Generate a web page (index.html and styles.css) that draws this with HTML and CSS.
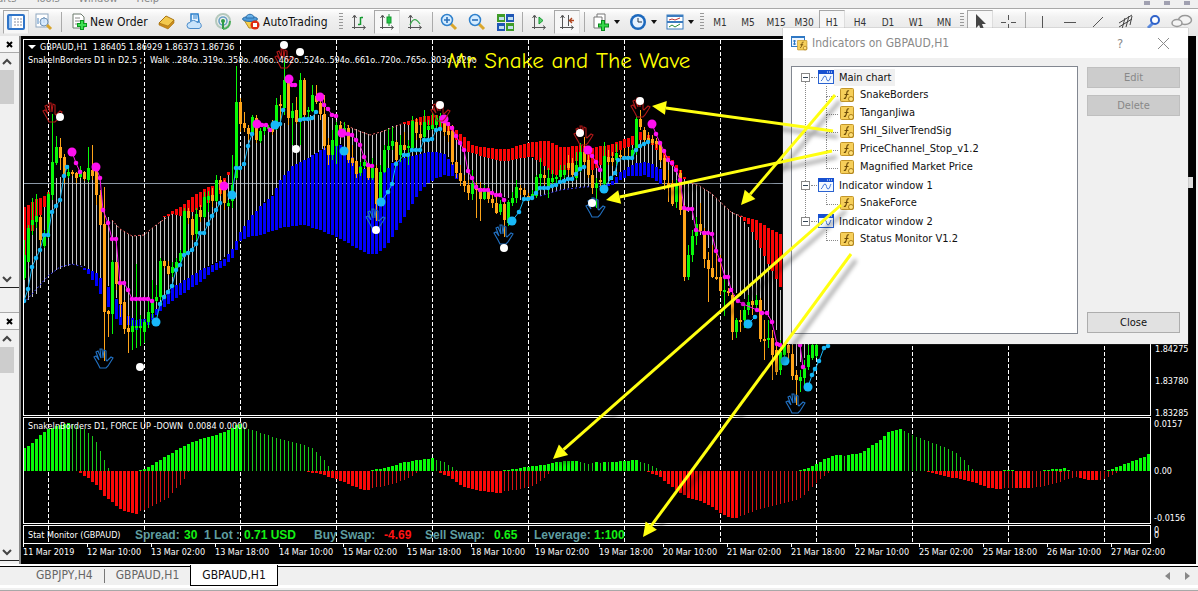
FILE: index.html
```html
<!DOCTYPE html>
<html lang="en">
<head>
<meta charset="utf-8">
<title>GBPAUD,H1</title>
<link rel="stylesheet" href="styles.css">
</head>
<body>
<nav class="menubar">
  <a href="#">Charts</a><a href="#">Tools</a><a href="#">Window</a><a href="#">Help</a>
  <span class="winbtns"><i></i><i></i><i></i></span>
</nav>

<div class="toolbar">
  <button class="tb on" aria-label="Market watch"><svg width="18" height="16"><rect x="1" y="1" width="16" height="14" rx="1" fill="#fff" stroke="#2f74c8" stroke-width="2"/><rect x="2" y="2" width="3" height="12" fill="#9cc4f0"/><path d="M7 5h8M7 8h8M7 11h8" stroke="#8a8fa0" stroke-dasharray="2 1"/></svg></button>
  <button class="tb" aria-label="Data window"><svg width="18" height="18"><rect x="1" y="1" width="12" height="13" fill="#fff" stroke="#8fa7c0"/><path d="M3 11V5M6 11V7M9 10V4" stroke="#4f86c0"/><circle cx="9" cy="9" r="4" fill="#cfe6fb" fill-opacity=".8" stroke="#7293b5"/><path d="M12 12l4 4" stroke="#d8a52c" stroke-width="3"/></svg></button>
  <span class="sep"></span>
  <button class="tb text neworder"><svg width="17" height="18"><path d="M2 1h8l3 3v11H2z" fill="#fff" stroke="#6d7a6d"/><path d="M4 5h5M4 8h6M4 11h4" stroke="#888"/><path d="M11 7v10M6 12h10" stroke="#0a9a1e" stroke-width="4"/><path d="M11 8v8M7 12h8" stroke="#3fe052" stroke-width="2"/></svg>New Order</button>
  <button class="tb" aria-label="MetaEditor"><svg width="18" height="16"><path d="M1 9L8 2l8 4-6 8z" fill="#f3c94e" stroke="#a87412"/><path d="M1 9l9 3 6-6v3l-6 6-9-4z" fill="#c98b1c" stroke="#a87412" stroke-width=".6"/></svg></button>
  <button class="tb" aria-label="Cloud"><svg width="18" height="18"><path d="M5 1h7l1 8H5z" fill="#e8f4ff" stroke="#2b7fcb" stroke-width="1.500"/><path d="M7 3h4M7 5h4" stroke="#2b7fcb"/><path d="M4 15.500a3 3 0 0 1 0-6 4 4 0 0 1 7 0 3 3 0 1 1 2 6z" fill="#c9e4fb" stroke="#4a8bc9"/></svg></button>
  <button class="tb" aria-label="Signals"><svg width="18" height="18" fill="none"><circle cx="9" cy="8" r="7" stroke="#b5c9bd" stroke-width="2"/><circle cx="9" cy="8" r="4" stroke="#6aa2c4" stroke-width="1.600"/><path d="M9 8v8" stroke="#2f9b46" stroke-width="2"/><path d="M9 16c4 0 7-3 7-8" stroke="#4caf5a" stroke-width="2"/><circle cx="9" cy="8" r="2" fill="#2f9b46"/></svg></button>
  <button class="tb text auto"><svg width="18" height="18"><path d="M2 7h13l-5 8H7z" fill="#f4cf4c" stroke="#b98b1d"/><ellipse cx="8" cy="6" rx="7.500" ry="2.500" fill="#4d9ad8" stroke="#2d6ea8"/><path d="M4 5c0-5 8-5 8 0z" fill="#69b2ea" stroke="#2d6ea8"/><circle cx="13" cy="12" r="4.500" fill="#e02c12"/><rect x="11" y="10" width="4" height="4" fill="#fff"/></svg>AutoTrading</button>
  <span class="grip first"></span>
  <button class="tb" aria-label="Bar chart"><svg width="16" height="16" fill="none" stroke="#555"><path d="M3.500 2v13M1.500 4l2-3 2 3M1 13.500h13M12 11.500l2.500 2-2.500 2"/><path d="M9.500 3v8M7 10.500h2M10 3.500h2" stroke="#149a30" stroke-width="1.500"/></svg></button>
  <button class="tb on" aria-label="Candlesticks"><svg width="16" height="16" fill="none" stroke="#555"><path d="M3.500 2v13M1.500 4l2-3 2 3M1 13.500h13M12 11.500l2.500 2-2.500 2"/><path d="M10 0v12" stroke="#149a30"/><rect x="8" y="3" width="4" height="6" fill="#22c544" stroke="#149a30"/></svg></button>
  <button class="tb" aria-label="Line chart"><svg width="16" height="16" fill="none" stroke="#555"><path d="M3.500 2v13M1.500 4l2-3 2 3M1 13.500h13M12 11.500l2.500 2-2.500 2"/><path d="M3 11c3-7 6-7 10-1" stroke="#3aa84c" stroke-width="1.300"/></svg></button>
  <span class="sep"></span>
  <button class="tb" aria-label="Zoom in"><svg width="18" height="18"><path d="M10 10l6 6" stroke="#dba72c" stroke-width="3"/><circle cx="7" cy="7" r="5.500" fill="#d5ecff" stroke="#2f80cc" stroke-width="1.500"/><path d="M4 7h6M7 4v6" stroke="#2a6fb8" stroke-width="1.600"/></svg></button>
  <button class="tb" aria-label="Zoom out"><svg width="18" height="18"><path d="M10 10l6 6" stroke="#dba72c" stroke-width="3"/><circle cx="7" cy="7" r="5.500" fill="#d5ecff" stroke="#2f80cc" stroke-width="1.500"/><path d="M4 7h6" stroke="#2a6fb8" stroke-width="1.600"/></svg></button>
  <button class="tb" aria-label="Tile windows"><svg width="17" height="17"><path d="M0 0h8v8H0zM9 9h8v8H9z" fill="#3f9c28"/><path d="M9 0h8v8H9zM0 9h8v8H0z" fill="#1f56b5"/><path d="M2 3h5v3H2zM11 3h5v3h-5zM2 12h5v3H2zM11 12h5v3h-5z" fill="#c3e0ef"/></svg></button>
  <span class="sep"></span>
  <button class="tb" aria-label="Auto scroll"><svg width="16" height="16" fill="none" stroke="#555"><path d="M3.500 2v13M1.500 4l2-3 2 3M1 13.500h13M12 11.500l2.500 2-2.500 2"/><path d="M8 3l4 3.500L8 10z" fill="#5fd070" stroke="#149a30"/></svg></button>
  <button class="tb on" aria-label="Chart shift"><svg width="16" height="16" fill="none" stroke="#555"><path d="M3.500 2v13M1.500 4l2-3 2 3M1 13.500h13M12 11.500l2.500 2-2.500 2M9.500 1v11"/><path d="M15 6.500h-4M13 4l-2.500 2.500L13 9" stroke="#b0441e" stroke-width="1.400"/></svg></button>
  <span class="sep"></span>
  <button class="tb drop" aria-label="Indicators"><svg width="18" height="18"><path d="M5 1h8v10H5z" fill="#fff" stroke="#777"/><path d="M2 4h8v11H2z" fill="#fff" stroke="#777"/><path d="M11 7v11M6 12.500h11" stroke="#0a8a1e" stroke-width="4"/><path d="M11 8v9M7 12.500h9" stroke="#35d84a" stroke-width="2"/></svg></button>
  <button class="tb drop" aria-label="Periods"><svg width="18" height="18"><circle cx="9" cy="9" r="8" fill="#1c68bd"/><circle cx="9" cy="9" r="5.500" fill="#e6f2ff"/><path d="M9 5v4h4" stroke="#234" fill="none"/></svg></button>
  <button class="tb drop" aria-label="Templates"><svg width="18" height="16"><rect x="1" y="1" width="16" height="14" fill="#fff" stroke="#3a7cc0"/><path d="M1 2h16M1 8h16" stroke="#3a7cc0" stroke-width="2"/><path d="M3 6l3-1 3 1 5-2" stroke="#b33" fill="none"/><path d="M3 13l3-2 3 2 5-3" stroke="#2a8a3a" fill="none"/></svg></button>
  <span class="grip second"></span>
  <button class="tb tf">M1</button><button class="tb tf">M5</button><button class="tb tf">M15</button><button class="tb tf">M30</button><button class="tb tf on">H1</button><button class="tb tf">H4</button><button class="tb tf">D1</button><button class="tb tf">W1</button><button class="tb tf">MN</button>
  <span class="grip"></span>
  <button class="tb on" aria-label="Cursor"><svg width="14" height="18"><path d="M3 1v14l3-3 2 5 3-1-2-5h4z" fill="#444"/></svg></button>
  <button class="tb" aria-label="Crosshair"><svg width="16" height="16" stroke="#555"><path d="M8.500 1v5M8.500 10v5M1 8.500h5M11 8.500h5"/></svg></button>
  <span class="sep"></span>
  <button class="tb" aria-label="Vertical line"><svg width="16" height="16" stroke="#555"><path d="M8.500 2v14"/></svg></button>
  <button class="tb" aria-label="Horizontal line"><svg width="16" height="16" stroke="#555"><path d="M2 8.500h12"/></svg></button>
  <button class="tb" aria-label="Trendline"><svg width="16" height="16" stroke="#555"><path d="M3 13L13 3"/></svg></button>
  <button class="tb" aria-label="Channel"><svg width="16" height="16" stroke="#444" fill="none"><path d="M1 13L14 5M1 9l13-8M4 15l3-11M8 13l3-11M12 11l2-9"/></svg></button>
  <button class="tb" aria-label="Search"><svg width="16" height="16" fill="none"><path d="M7 9l-5 5" stroke="#5a8ae0" stroke-width="3"/><circle cx="9" cy="6" r="4" fill="#fff" stroke="#2f62c9" stroke-width="2"/></svg></button>
  <button class="tb chat" aria-label="Chat"><svg width="22" height="16" fill="#f4f4f4" stroke="#999" stroke-width="1.500"><ellipse cx="14" cy="6" rx="6.500" ry="4.500"/><ellipse cx="6" cy="9" rx="5" ry="3.500"/></svg></button>
</div>

<div class="workspace">
  <aside class="side">
    <section class="dock market">
      <header><button aria-label="Close market watch"><svg width="7" height="7"><path d="M1 1l5 5M6 1L1 6" stroke="#000" stroke-width="2"/></svg></button></header>
      <div class="scroll"><svg width="10" height="8"><path d="M1 6l4-4 4 4"/></svg><b></b><svg class="down" width="10" height="8"><path d="M1 2l4 4 4-4"/></svg></div>
    </section>
    <section class="dock navigator">
      <header><button aria-label="Close navigator"><svg width="7" height="7"><path d="M1 1l5 5M6 1L1 6" stroke="#000" stroke-width="2"/></svg></button></header>
      <div class="scroll"><svg width="10" height="8"><path d="M1 6l4-4 4 4"/></svg><b></b><svg class="down" width="10" height="8"><path d="M1 2l4 4 4-4"/></svg></div>
    </section>
  </aside>

  <main class="chart">
    <div class="pane price">
      <svg class="plot"><g id="price" transform="translate(-24 -40)"></g></svg>
      <div class="caption">
        <p class="symbol"><i></i>GBPAUD,H1&nbsp; 1.86405 1.86929 1.86373 1.86736</p>
        <p>SnakeInBorders D1 in D2.5 ;&nbsp;&nbsp; Walk ..284o..319o..358o..406o..462o..524o..594o..661o..720o..765o..803o..829o</p>
      </div>
      <h1 class="banner">Mr. Snake and The Wave</h1>
    </div>
    <div class="scale price-scale"><i class="last"></i><span>1.84275</span><span>1.83780</span><span>1.83285</span></div>
    <div class="pane force">
      <svg class="plot"><g id="force" transform="translate(-24 -418)"></g></svg>
      <div class="caption"><p>SnakeInBorders D1, FORCE UP -DOWN&nbsp; 0.0084 0.0000</p></div>
    </div>
    <div class="scale force-scale"><span>0.0157</span><span>0.00</span><span>-0.0156</span></div>
    <div class="pane status">
      <svg class="plot"><g id="status" transform="translate(-24 -526)"></g></svg>
      <div class="stats">
        <small>Stat Monitor (GBPAUD)</small><span>Spread:</span><b>30</b><span>1 Lot :</span><b>0.71 USD</b><span>Buy Swap:</span><b class="neg">-4.69</b><span>Sell Swap:</span><b>0.65</b><span>Leverage:</span><b>1:100</b>
      </div>
    </div>
    <div class="scale status-scale"><span>0</span><span>0</span></div>
    <div class="times">
      <span>11 Mar 2019</span><span>12 Mar 10:00</span><span>13 Mar 02:00</span><span>13 Mar 18:00</span><span>14 Mar 10:00</span><span>15 Mar 02:00</span><span>15 Mar 18:00</span><span>18 Mar 10:00</span><span>19 Mar 02:00</span><span>19 Mar 18:00</span><span>20 Mar 10:00</span><span>21 Mar 02:00</span><span>21 Mar 18:00</span><span>22 Mar 10:00</span><span>25 Mar 02:00</span><span>25 Mar 18:00</span><span>26 Mar 10:00</span><span>27 Mar 02:00</span>
    </div>
  </main>
</div>

<footer class="tabs">
  <a href="#">GBPJPY,H4</a><i></i><a href="#">GBPAUD,H1</a><a href="#" class="active">GBPAUD,H1</a>
  <span class="nav"><svg width="5" height="8"><path d="M5 0v8L0 4z"/></svg><svg width="5" height="8"><path d="M0 0v8l5-4z"/></svg></span>
</footer>

<svg class="defs" width="0" height="0">
  <symbol id="win" viewBox="0 0 16 14"><rect x=".5" y=".5" width="15" height="13" fill="#f4f9ff" stroke="#2a62d0"/><path d="M0 0h16v4H0z" fill="#1650d0"/><path d="M9 2h1M11 2h1M13 2h1" stroke="#fff"/><path d="M3 11c2-1 2-5 4-5s1 5 3 5 2-4 3-5" fill="none" stroke="#3f74d8"/></symbol>
  <symbol id="fn" viewBox="0 0 15 15"><rect x=".5" y=".5" width="13" height="13" rx="1" fill="#f6cf5a" stroke="#c3962a"/><path d="M9 3c-2-1-2 1-2.500 4S5 11 4 10M4.500 6.500h4" fill="none" stroke="#6b4a08" stroke-width="1.200"/><circle cx="11" cy="11" r="2.500" fill="#ffe07a" stroke="#a87c18"/></symbol>
</svg>

<div class="dialog" role="dialog" aria-labelledby="dlg-title">
  <header>
    <svg width="17" height="15"><rect x=".5" y=".5" width="13" height="10" fill="#eef6ff" stroke="#2f78c4"/><path d="M0 1h14" stroke="#2f78c4" stroke-width="2"/><path d="M3.500 4v5M2 5h3M2 8h3" stroke="#2f78c4"/><svg x="6" y="4" width="11" height="11"><use href="#fn"/></svg></svg>
    <h2 id="dlg-title">Indicators on GBPAUD,H1</h2>
    <button aria-label="Help">?</button>
    <button aria-label="Close dialog"><svg width="11" height="11"><path d="M0 0l11 11M11 0L0 11" stroke="#8a8a8a"/></svg></button>
  </header>
  <div class="content">
    <ul class="tree">
      <li><div class="node"><button aria-label="Collapse main chart"></button><svg width="16" height="14"><use href="#win"/></svg><span class="sel">Main chart</span></div>
        <ul><li><svg width="15" height="15"><use href="#fn"/></svg>SnakeBorders</li><li><svg width="15" height="15"><use href="#fn"/></svg>TanganJiwa</li><li><svg width="15" height="15"><use href="#fn"/></svg>SHI_SilverTrendSig</li><li><svg width="15" height="15"><use href="#fn"/></svg>PriceChannel_Stop_v1.2</li><li><svg width="15" height="15"><use href="#fn"/></svg>Magnified Market Price</li></ul></li>
      <li><div class="node"><button aria-label="Collapse window 1"></button><svg width="16" height="14"><use href="#win"/></svg><span>Indicator window 1</span></div>
        <ul><li><svg width="15" height="15"><use href="#fn"/></svg>SnakeForce</li></ul></li>
      <li><div class="node"><button aria-label="Collapse window 2"></button><svg width="16" height="14"><use href="#win"/></svg><span>Indicator window 2</span></div>
        <ul><li><svg width="15" height="15"><use href="#fn"/></svg>Status Monitor V1.2</li></ul></li>
    </ul>
    <div class="actions"><button disabled>Edit</button><button disabled>Delete</button><button class="close">Close</button></div>
  </div>
</div>

<svg class="arrows" id="arrows"></svg>
<script src="chart.js"></script>
</body>
</html>
```

FILE: styles.css
```css
* { box-sizing: border-box; }
body { margin: 0; height: 100vh; min-height: 500px; overflow: hidden; display: flex; flex-direction: column; position: relative; background: #f0f0f0; font-family: "DejaVu Sans Condensed", "DejaVu Sans", sans-serif; font-size: 11px; color: #111; }
button { font: inherit; color: inherit; background: none; border: 0; padding: 0; margin: 0; }
a { color: inherit; text-decoration: none; }
ul, p, h1, h2 { margin: 0; padding: 0; list-style: none; font-weight: normal; }
svg { display: block; flex: none; }
.defs { position: absolute; }

.menubar { height: 9px; flex: none; overflow: hidden; display: flex; align-items: flex-end; gap: 19px; padding: 0 8px 3px 0; border-bottom: 1px solid #a9a9a9; color: #888; }
.menubar a { line-height: 12px; }
.menubar a:first-child { margin-left: -16px; }
.winbtns { margin-left: auto; display: flex; gap: 14px; }
.winbtns i { width: 6px; height: 4px; background: #a0a0b0; }

.toolbar { height: 27px; flex: none; display: flex; align-items: stretch; padding: 1px 4px 2px 2px; background: linear-gradient(#fff, #f1f1f1 30%, #e6e6e6); overflow: hidden; }
.tb { width: 28px; flex: none; display: flex; align-items: center; justify-content: center; white-space: nowrap; }
.tb.on { border: 1px solid #a8a8a8; border-right-color: #ddd; border-bottom-color: #eee; background: #f7f7f7; margin: 0 1px; width: 26px; }
.tb.text { font-size: 12px; justify-content: flex-start; }
.neworder { width: 89px; padding-left: 7px; gap: 2px; }
.auto { width: 97px; padding-left: 5px; gap: 3px; }
.tb.drop { width: 37px; gap: 4px; }
.tb.drop::after { content: ""; border: 3px solid transparent; border-top: 4px solid #111; border-bottom: 0; }
.tb.tf { font-size: 10px; color: #333; margin-right: 0; }
.tb.tf.on { margin-right: 1px; }
.sep { width: 6px; flex: none; background: linear-gradient(#aaa, #aaa) center / 1px 20px no-repeat; }
.grip { width: 4px; flex: none; margin: 3px 2px; background: repeating-linear-gradient(#999 0 1px, transparent 1px 3px); }
.grip.first { margin-left: 5px; }
.chat { margin-left: auto; }

.workspace { flex: 1; display: flex; min-height: 0; }
.side { width: 21px; flex: none; display: flex; flex-direction: column; border-right: 2px solid #8a8a8a; gap: 24px; padding-bottom: 3px; background: #f0f0f0; }
.dock { display: flex; flex-direction: column; border-bottom: 1px solid #222; }
.market { height: 252px; flex: none; }
.navigator { flex: 1; border-top: 1px solid #aaa; }
.dock header { height: 17px; display: flex; justify-content: flex-end; align-items: center; padding-right: 6px; border-bottom: 1px solid #aaa; background: #f6f6f6; }
.scroll { flex: 1; width: 14px; display: flex; flex-direction: column; align-items: center; padding: 5px 1px 4px 0; }
.scroll svg { fill: none; stroke: #444; stroke-width: 2; }
.scroll b { width: 14px; height: 34px; margin-top: 4px; background: #cdcdcd; }
.navigator .scroll b { height: 26px; }
.scroll .down { margin-top: auto; }

.chart { flex: 1; min-width: 0; background: #000; color: #fff; display: grid; grid-template-columns: minmax(0, 1fr) 45px; grid-template-rows: minmax(0, 1fr) 107px 19px 19px; row-gap: 1px; padding: 3px 0 0 2px; margin-right: 2px; font-size: 9px; }
.pane { position: relative; border: 1px solid #fff; overflow: hidden; }
.plot { position: absolute; inset: 0; width: 100%; height: 100%; }
.caption { position: relative; padding: 1px 0 0 4px; line-height: 13px; white-space: nowrap; }
.force .caption { padding-top: 2px; }
.symbol i { display: inline-block; border: 4px solid transparent; border-top-color: #fff; border-bottom: 0; margin: 0 4px 1px 0; }
.banner { position: absolute; left: 423px; top: 8px; font: 23px/26px "Comic Sans MS", "Comic Neue", Lato, sans-serif; color: #ff0; white-space: nowrap; }
.scale { position: relative; display: flex; flex-direction: column; line-height: 12px; }
.price-scale { justify-content: flex-end; gap: 20px; padding-left: 4px; margin-bottom: -3px; }
.last { position: absolute; right: 3px; top: 138px; width: 5px; height: 11px; background: #ddd; }
.force-scale { justify-content: space-between; padding: 1px 0 0 3px; }
.status-scale { padding: 3px 0 0 3px; line-height: 5px; }
.stats { position: relative; display: grid; grid-template-columns: 107px 49px 20px 40px 70px 70px 41px 69px 40px 60px 60px; align-items: center; padding-left: 4px; height: 18px; font: bold 12px/16px "Liberation Sans", Arial, sans-serif; color: #5f9ea0; white-space: nowrap; }
.stats small { font: 9px/16px "DejaVu Sans Condensed", "DejaVu Sans", sans-serif; color: #fff; }
.stats b { color: #14f014; }
.stats .neg { color: #ff1414; }
.times { grid-column: 1 / -1; display: grid; grid-template-columns: repeat(18, 64px); line-height: 14px; }
.times span { white-space: nowrap; background: linear-gradient(#fff, #fff) 0 0 / 1px 3px no-repeat; padding-top: 1px; margin-top: -1px; }

.tabs { height: 27px; flex: none; display: flex; align-items: flex-start; padding-left: 20px; border-bottom: 1px solid #a8a8a8; background: linear-gradient(#fff 0 2px, #000 2px 3px, #f0f0f0 3px 21px, #fff 21px 24px, #f0f0f0 24px); font-size: 12px; line-height: 17px; color: #666; }
.tabs a { padding: 3px 11px 0; height: 20px; }
.tabs a:first-child { padding-left: 16px; }
.tabs i { width: 1px; height: 14px; margin-top: 5px; background: #777; }
.tabs .active { height: 21px; margin-top: 1px; padding-top: 2px; background: #fff; border: 1px solid #000; border-top: 0; color: #111; }
.nav { margin: 8px 8px 0 auto; display: flex; gap: 15px; fill: #888; }

.dialog { position: absolute; left: 783px; top: 28px; width: 405px; height: 316px; display: flex; flex-direction: column; background: #f0f0f0; box-shadow: 0 0 1px #777; }
.dialog header { height: 30px; flex: none; display: flex; align-items: center; background: #fff; padding: 0 18px 0 8px; color: #8a8a8a; }
.dialog h2 { font-size: 12px; margin: 0 auto 0 4px; }
.dialog header button { width: 12px; margin-left: 32px; font-size: 13px; }
.content { flex: 1; display: flex; gap: 9px; padding: 8px 8px 10px; }
.tree { flex: 1; background: #fff; border: 1px solid #828790; padding: 1px 0 0 9px; line-height: 18px; }
.node { display: flex; align-items: center; height: 18px; position: relative; }
.node button { width: 9px; height: 9px; border: 1px solid #888; background: linear-gradient(#345, #345) center / 5px 1px no-repeat, #fff; z-index: 1; }
.node::after { content: ""; position: absolute; left: 10px; top: 9px; width: 6px; border-top: 1px dotted #888; }
.node svg { margin-left: 8px; }
.node span { padding: 0 3px 0 5px; line-height: 17px; }
.sel { background: #f0f0f0; }
.tree > li { position: relative; }
.tree > li:not(:last-child)::before { content: ""; position: absolute; left: 4px; top: 9px; bottom: -9px; border-left: 1px dotted #888; }
.tree ul { padding-left: 25px; }
.tree ul li { display: flex; align-items: center; height: 18px; gap: 5px; position: relative; padding-left: 14px; }
.tree ul li::before { content: ""; position: absolute; left: 0; top: 0; width: 11px; height: 10px; border: dotted #888; border-width: 0 0 1px 1px; }
.tree ul li:not(:last-child)::after { content: ""; position: absolute; left: 0; top: 10px; height: 8px; border-left: 1px dotted #888; }
.actions { width: 93px; display: flex; flex-direction: column; gap: 7px; padding-top: 1px; }
.actions button { height: 21px; border: 1px solid #bfbfbf; background: #ccc; color: #888; }
.actions .close { margin-top: auto; margin-bottom: 1px; border-color: #adadad; background: #e1e1e1; color: #111; }
.arrows { position: absolute; left: 0; top: 0; width: 100%; height: 100%; pointer-events: none; filter: drop-shadow(5px 6px 2px rgba(0, 0, 0, .4)); }
```

FILE: chart.js
```js
const NS = 'http://www.w3.org/2000/svg';
const add = (g, name, attrs) => {
  const e = document.createElementNS(NS, name);
  for (const k in attrs) e.setAttribute(k, attrs[k]);
  g.appendChild(e);
  return e;
};
const path = (g, d, stroke, width, extra) => add(g, 'path', Object.assign({ d, stroke, 'stroke-width': width, fill: 'none' }, extra));
const nums = s => s.trim().split(/[\s,]+/).map(Number);

// Linear interpolation over "x y1 [y2]" rows, one sample per 4px bar.
function samples(text, n) {
  const v = nums(text), rows = [], out = [];
  for (let i = 0; i < v.length; i += n) rows.push(v.slice(i, i + n));
  for (let i = 0; i < rows.length; i++) {
    const a = rows[i], b = rows[i + 1];
    if (!b) { out.push(a); break; }
    for (let x = a[0]; x < b[0]; x += 4) {
      const t = (x - a[0]) / (b[0] - a[0]);
      out.push(a.map((p, k) => k ? Math.round(p + (b[k] - p) * t) : x));
    }
  }
  return out;
}
const bars = (g, rows, color, width, base) => path(g, rows.map(r => `M${r[0] + .5} ${r[1]}V${r[2] === undefined ? base : r[2]}`).join(''), color, width);

function grid(g, y1, y2) {
  let d = '';
  for (let x = 48; x < 1150; x += 96) d += `M${x + .5} ${y1}V${y2}`;
  path(g, d, '#fff', 1, { 'stroke-dasharray': '4 2' });
}

const price = document.getElementById('price');
grid(price, 40, 415);
path(price, 'M24 183.5H1150', '#8b98a6', 1);

// Span between the upper and lower envelope.
bars(price, samples(`24 240 303 36 222 294 48 190 276 56 178 270 72 172 264 84 172 266 96 180 274 104 214 282
 112 220 290 120 229 306 132 236 320 144 235 320 156 225 310 164 217 295 172 214 288 184 213 280 200 207 270
 216 198 262 228 175 255 236 160 242 244 136 226 252 128 218 260 130 206 272 130 195 280 125 180 292 118 168
 310 115 157 324 115 148 336 120 140 348 126 152 360 131 170 372 135 176 380 132 182 392 126 162 404 124 158
 416 125 155 428 125 152 440 126 153 448 134 157 456 140 178 472 153 186 488 158 192 500 161 196 520 158 200
 528 157 199 540 160 196 552 174 192 560 175 190 572 168 187 584 155 187 596 160 186 608 160 184 616 152 176
 628 147 167 644 138 162 660 150 168 672 166 190 680 175 198 688 182 212 700 186 235 712 194 255 724 206 282
 740 217 296 752 232 305 764 256 310 776 279 330 784 300 350 796 340 366 812 344 350`, 3), '#c4c4c4', 1);
[`24 207 255 28 205 240 36 199 222 44 196 207 48 192 194`,
 `164 216 217 172 211 214 180 207 216 192 197 212 204 189 205 216 184 198 224 178 190 228 172 175`,
 `404 122 124 412 120 125 424 116 125 436 115 125 444 118 130 456 130 140 464 137 150 472 145 153 488 148 158
  500 149 161 508 149 161 520 145 158 532 142 157 540 141 162 548 141 170 552 143 174 560 147 175 568 147 170
  580 145 157 592 148 170 600 146 165 608 145 160 616 142 152 624 139 148 632 136 145 640 132 140 648 135 140
  656 143 150 664 152 158 672 160 166 680 170 175 684 177 179`,
 `740 216 217 748 218 224 756 220 240 764 225 256 772 230 271 780 234 287`
].forEach(t => bars(price, samples(t, 3), '#fa0505', 3));
[`84 268 270 88 269 274 96 273 286 104 282 302 112 292 312 120 305 325 128 316 325 136 320 330 148 318 325
  156 309 315 164 295 307 176 285 298 188 278 290 200 270 282 212 265 272 224 259 266 232 249 258 240 232 241
  248 220 237 260 206 235 272 196 231 280 180 228 292 166 226 304 160 225 320 150 230 336 142 237 348 151 243
  356 163 248 368 172 254 376 182 254 384 172 248 392 163 237 396 161 230 408 157 210 420 154 191 428 152 183
  436 152 178 444 154 175 452 164 176 456 174 179`,
 `608 184 186 612 181 185 620 172 180 628 167 176 636 163 176 644 162 175 652 164 178 660 169 184`
].forEach(t => bars(price, samples(t, 3), '#0000fc', 3));

// Dotted outline of the envelope.
path(price, 'M112 220L120 229L132 236L144 235L156 225L172 214M340 122L356 130L370 135L384 131L404 123M688 182L700 186L712 194L732 213L744 217', '#f06060', 1, { 'stroke-dasharray': '2 2' });
path(price, 'M24 303L48 276L60 267L72 264L84 267M540 196L560 190L584 187L608 186', '#4040ff', 1, { 'stroke-dasharray': '2 2' });

// Candles from x = 24 in 4px steps: direction, high, low, body top, body bottom.
const candles = `g240 280 255 278|g225 262 228 262|g198 235 220 225|g194 228 216 222|o215 247 217 240|g230 248 236 246|g192 238 194 237|g114 200 162 195|g136 165 147 163|o138 170 147 158|o154 183 157 176|g165 178 172 176|o170 176 172 173|o172 183 173 178|g166 178 170 177|o171 181 172 179|g147 182 168 180|o145 180 170 176|o165 205 167 195|o190 225 195 225|o187 361 224 312|o310 337 311 314|g260 334 262 314|o262 290 262 284|o280 317 284 304|o300 334 302 329|o315 353 328 332|g320 350 326 332|g264 348 326 328|g315 346 326 327|g320 343 322 332|g300 328 312 322|g280 318 300 313|g285 302 297 301|g258 300 261 297|o260 268 261 266|o261 275 266 274|g262 277 267 273|g258 272 262 271|g250 265 253 261|g208 255 211 253|o208 224 211 218|o216 240 219 235|g208 240 214 234|o205 222 210 217|g192 218 197 217|g191 212 196 200|o188 207 195 201|g175 202 180 201|o176 196 180 190|o180 210 188 203|g200 207 203 206|g155 208 185 201|g66 180 102 178|o98 132 102 124|o112 132 123 128|o125 140 128 134|g115 135 117 134|o115 143 118 140|g128 143 131 141|g124 135 127 131|g125 130 127 128|o120 135 125 132|g98 130 105 128|o95 125 104 106|g60 115 80 108|o75 125 80 118|g103 145 111 118|o97 124 110 122|g73 145 80 121|o78 122 80 115|g107 118 110 112|g85 112 95 111|o85 104 96 102|o95 120 103 114|o95 150 114 146|o138 165 145 155|g130 160 140 155|g122 164 125 146|o121 138 125 132|g122 135 128 133|o125 163 128 160|o145 166 158 163|o160 178 161 174|g162 176 167 173|g155 168 162 166|o164 180 165 178|g158 180 168 178|o165 221 168 204|g165 206 172 202|g145 173 150 172|g129 150 146 150|g127 150 141 146|o140 165 142 160|g135 162 145 155|o132 150 145 150|g140 165 146 148|g116 150 121 148|o118 140 122 133|o122 140 134 138|g110 140 122 137|g120 130 126 130|g112 130 125 129|g115 128 118 125|g113 130 116 122|o115 136 118 132|o125 142 131 135|o125 165 131 162|o160 178 162 173|o165 186 173 181|o175 192 181 186|o180 200 185 193|g170 200 184 194|o182 218 185 190|o182 221 188 199|g185 200 190 199|o187 203 190 199|o195 208 199 203|o195 214 203 213|g200 215 204 212|o200 237 204 220|g200 226 202 223|g192 206 198 203|g180 203 187 198|o185 195 188 190|o188 200 190 195|o193 202 196 199|g190 200 194 199|g175 198 177 196|g158 186 174 178|o170 185 175 178|g168 198 178 188|g170 188 178 182|g175 185 177 179|g165 182 170 177|g165 178 170 175|o155 175 163 168|o158 178 163 175|g152 180 165 178|g143 172 152 168|o137 168 152 162|o155 178 160 175|o170 194 175 188|g178 208 183 188|o178 186 180 182|g142 186 156 184|o150 165 157 162|o152 166 158 162|g144 165 153 160|o150 160 155 156|o148 160 156 157|o148 160 156 158|g148 160 150 159|g117 155 119 148|o110 130 119 127|o127 143 130 140|o132 144 138 142|o135 145 139 143|o138 148 141 144|o143 162 144 160|o155 190 158 180|o170 202 183 186|o180 206 183 204|g180 208 184 202|o170 215 173 210|o205 281 208 277|g245 280 255 277|g230 262 236 255|g217 245 224 236|o203 232 224 231|o228 268 231 259|o252 302 260 269|o245 278 268 277|o250 280 277 278|o255 295 277 291|g275 316 290 292|o288 296 291 292|o290 340 295 332|g318 338 320 332|o310 332 320 322|g305 328 310 320|g295 315 302 310|o300 315 301 305|g295 310 300 305|o298 342 300 339|o320 360 339 340|g320 348 338 340|o330 380 338 355|o345 375 350 372|g340 375 352 370|g340 360 345 355|o344 362 345 353|o345 380 354 376|o370 405 375 380|g370 392 377 381|g360 385 368 378|g345 370 355 367|g344 360 345 358|g344 358 345 356`.split('|');
const layer = { g: ['', ''], o: ['', ''] };
candles.forEach((c, i) => {
  const x = 24.5 + i * 4, [hi, lo, top, bot] = nums(c.slice(1)), l = layer[c[0]];
  l[0] += `M${x} ${hi}V${lo}`;
  l[1] += `M${x} ${top}V${Math.max(bot, top + 2)}`;
});
for (const [k, color] of [['o', '#ffa51a'], ['g', '#08fa08']]) {
  path(price, layer[k][0], color, 1);
  path(price, layer[k][1], color, 3);
}

// Trailing stop lines; a leading * marks a signal dot on the first point.
function trail(text, color) {
  text.split('|').forEach(t => {
    const big = t.trim()[0] === '*', v = nums(t.replace('*', ''));
    let d = '';
    for (let i = 0; i < v.length; i += 2) {
      d += (i ? 'L' : 'M') + v[i] + ' ' + v[i + 1];
      add(price, 'circle', { cx: v[i], cy: v[i + 1], r: big && !i ? 4.5 : 2.3, fill: color });
    }
    path(price, d, color, 1);
  });
}
trail(`*72 152 76 163 80 172|*96 167 100 178 103 210 108 223 112 239 116 239 120 283 124 283 128 290 132 299 136 299 140 299 144 299 148 299 152 301|*224 186|*257 124 262 125 266 125 270 130|*289 79 292 85 295 85|*320 97 324 105 328 109 332 115 336 116|*342 133 348 134 352 135 356 140 360 145 364 157 368 165 372 166|*444 119 448 124 452 128 456 136 460 143 464 150 468 171 472 178 476 187 480 190 484 190 488 190 492 193 496 195 500 195 504 200|*588 150 592 156 596 162 600 170|*652 124 656 134 660 143 664 151 668 160 672 163 676 170 680 180 684 208 688 209 692 209 696 230 704 233 708 233 712 234 716 251 720 260 725 277 728 277 731 290 738 301 743 304 757 310 762 313 767 313 772 322 777 344 780 345|800 345 803 367`, '#ff10f0');
trail(`24 301 28 289 32 267 36 258 40 250 44 235 48 235 52 212 56 206 60 200 64 176 67 167|*156 322 160 304 164 297 168 292 172 286 176 270 180 265 184 255 188 253 192 250 196 244 200 233 204 233 208 224 212 216 216 210 220 203|*232 195 236 168 240 168 244 164 248 146 252 134|*275 125 280 124 283 110|300 120 304 119 308 119 312 118 316 112|*344 151|*381 202 388 192 392 184 396 164 404 155 408 155 412 150 416 150 420 150 424 140 428 140 432 139 436 130 440 129|*512 221 519 212 524 199 528 199 532 198 536 193 540 188 544 188 548 188 552 186 556 185 560 182 564 181 568 179 572 179 576 174 580 169 584 167|*604 189 611 178 615 173 618 160 624 158 628 158 632 158 636 150 640 146 644 144 648 142|*748 324 755 317|*785 361|*808 387 812 375 815 369 819 361 824 348 828 346`, '#18b8f8');

const hand = 'M6 20L4 16L0 9L2 8L5 12L2 4L4 3L7 10L6 1L8 1L9 10L10 2L12 3L12 12L13 13L17 9L19 10L14 18L12 20Z';
const hands = (list, color) => list.forEach(([x, y]) => path(price, hand, color, 1.1, { transform: `translate(${x} ${y})` }));
hands([[43, 102], [275, 48], [431, 101], [574, 125], [631, 97]], '#b01818');
hands([[94, 348], [366, 208], [494, 224], [586, 197], [786, 393]], '#2272c4');
[[60, 117], [140, 367], [284, 45], [300, 52], [296, 149], [376, 230], [440, 105], [504, 248], [580, 133], [592, 203], [640, 101]]
  .forEach(([cx, cy]) => add(price, 'circle', { cx, cy, r: 4, fill: '#fff' }));

// Force histogram around the zero line.
const force = document.getElementById('force'), Z = 471, G = '#08fa08', R = '#fa0808';
grid(force, 418, 523);
[`24 448 32 443 40 435 48 429 56 426 68 423`, `140 470 148 467 156 462 168 455 180 448 192 442 204 438 216 435 228 430 236 425 240 424`,
 `372 470 384 468 392 466 400 463 412 461 424 459 432 458`, `504 470 512 469 520 468 532 466 544 465 556 462 568 461 576 461`, `596 462`, `604 462`,
 `612 462 620 461 636 460`, `800 470 808 468 816 464 824 459 836 455 840 455`, `848 455 860 453 868 448 880 440 888 432 900 429`,
 `1004 470 1012 470`, `1044 470 1056 469 1064 468 1068 470`, `1108 470 1120 466 1132 461 1144 457 1148 454`].forEach(t => bars(force, samples(t, 2), G, 3, Z));
[`72 424 84 429 92 436 96 442 100 451 104 460 108 468`, `244 427 252 430 264 434 280 439 304 445 312 448 320 456 324 460 328 466 332 470`,
 `436 460 444 462 448 465 452 467 456 470`, `580 462 588 464 592 463`, `600 463`, `608 462`, `640 462 648 464 656 468 660 470`, `844 456`,
 `904 431 912 435 924 440 936 444 948 449 956 453 964 460 972 469`].forEach(t => bars(force, samples(t, 2), '#18c818', 1, Z));
[`80 473 88 478 96 485 100 490 104 496 112 502 120 509 128 512 136 514`, `308 472 320 474 336 479 348 484 360 489 368 490`,
 `440 473 448 476 456 482 464 487 476 490 488 492 500 493`, `648 472 660 477 668 484 676 490 688 498 700 501 712 507 720 513 728 517 736 518`,
 `928 472 944 476 960 479 976 483 988 488 1000 489`, `1016 488 1028 488`, `1060 472`, `1080 478 1088 480 1096 480`].forEach(t => bars(force, samples(t, 2), R, 3, Z));
[`140 511 148 508 156 504 168 498 176 488 180 485 184 479 188 472`, `372 488 384 486 392 484 400 481 408 478 416 473`,
 `504 491 516 490 528 487 536 484 544 478 548 474`, `740 516 748 513 756 510 768 507 780 504 792 501 800 498 804 495 812 487 820 479 828 473`,
 `1004 488 1012 488`, `1032 488 1044 486 1056 483 1068 479 1076 477`, `1100 480 1108 477 1116 473`].forEach(t => bars(force, samples(t, 2), '#d41414', 1, Z));

grid(document.getElementById('status'), 526, 543);

// Callout arrows: tail to tip.
const arrows = document.getElementById('arrows');
[[833, 131, 652, 106], [832, 151, 606, 200], [835, 95, 741, 205], [841, 205, 553, 459], [851, 254, 643, 537]].forEach(([x1, y1, x2, y2]) => {
  const len = Math.hypot(x2 - x1, y2 - y1), ux = (x2 - x1) / len, uy = (y2 - y1) / len;
  const bx = x2 - ux * 14, by = y2 - uy * 14;
  path(arrows, `M${x1} ${y1}L${bx} ${by}`, '#ffff10', 3);
  add(arrows, 'path', { d: `M${x2} ${y2}L${bx - uy * 7} ${by + ux * 7}L${bx + uy * 7} ${by - ux * 7}Z`, fill: '#ffff10' });
});
```
